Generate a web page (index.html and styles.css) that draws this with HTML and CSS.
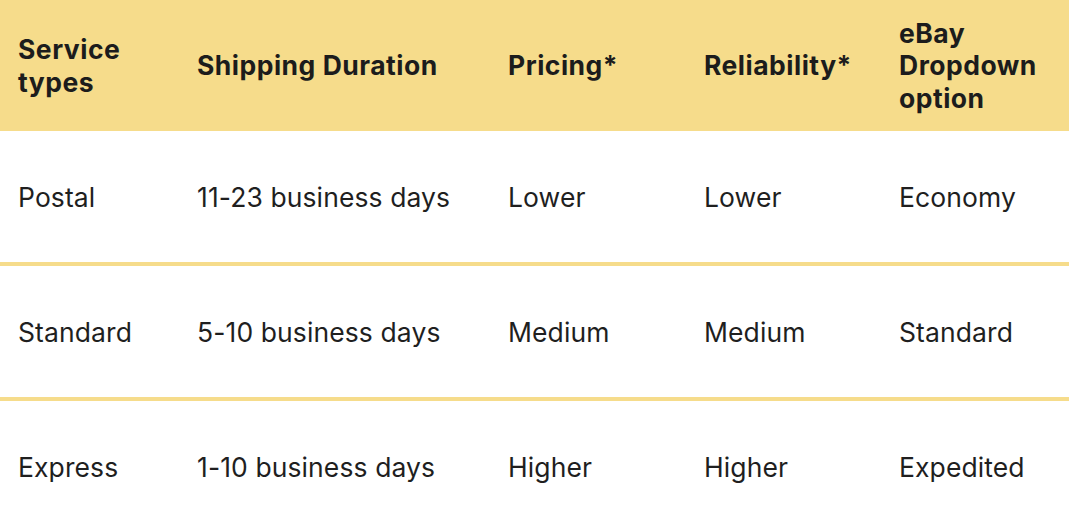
FILE: index.html
```html
<!DOCTYPE html>
<html lang="en">
<head>
<meta charset="utf-8">
<title>Shipping services</title>
<link rel="stylesheet" href="styles.css">
</head>
<body>
<table class="ship-table">
  <colgroup>
    <col class="c1"><col class="c2"><col class="c3"><col class="c4"><col class="c5">
  </colgroup>
  <thead>
    <tr>
      <th>Service<br>types</th>
      <th>Shipping Duration</th>
      <th>Pricing*</th>
      <th>Reliability*</th>
      <th>eBay<br>Dropdown<br>option</th>
    </tr>
  </thead>
  <tbody>
    <tr>
      <td>Postal</td>
      <td>11-23 business days</td>
      <td>Lower</td>
      <td>Lower</td>
      <td>Economy</td>
    </tr>
    <tr>
      <td>Standard</td>
      <td>5-10 business days</td>
      <td>Medium</td>
      <td>Medium</td>
      <td>Standard</td>
    </tr>
    <tr>
      <td>Express</td>
      <td>1-10 business days</td>
      <td>Higher</td>
      <td>Higher</td>
      <td>Expedited</td>
    </tr>
  </tbody>
</table>
</body>
</html>
```

FILE: styles.css
```css
html, body {
  margin: 0;
  padding: 0;
  background: #ffffff;
}

body {
  font-family: Inter, "Noto Sans", "Liberation Sans", sans-serif;
  color: #1f1f1f;
}

.ship-table {
  width: 1069px;
  border-collapse: separate;
  border-spacing: 0;
  table-layout: fixed;
}

.c1 { width: 177px; }
.c2 { width: 311px; }
.c3 { width: 196px; }
.c4 { width: 195px; }
.c5 { width: 190px; }

.ship-table th,
.ship-table td {
  text-align: left;
  vertical-align: middle;
  padding: 0 0 0 20px;
}

.ship-table th:first-child,
.ship-table td:first-child {
  padding-left: 18px;
}

.ship-table thead tr {
  height: 131px;
}

.ship-table th {
  background: #f6dc8b;
  font-size: 26.5px;
  font-weight: 700;
  letter-spacing: 0.5px;
  line-height: 32.5px;
  color: #1c1c1c;
}

.ship-table tbody tr {
  height: 135px;
}

.ship-table td {
  border-bottom: 4px solid #f6dc8b;
  font-size: 26.5px;
  font-weight: 400;
  letter-spacing: 0.1px;
  line-height: 32px;
}
```
